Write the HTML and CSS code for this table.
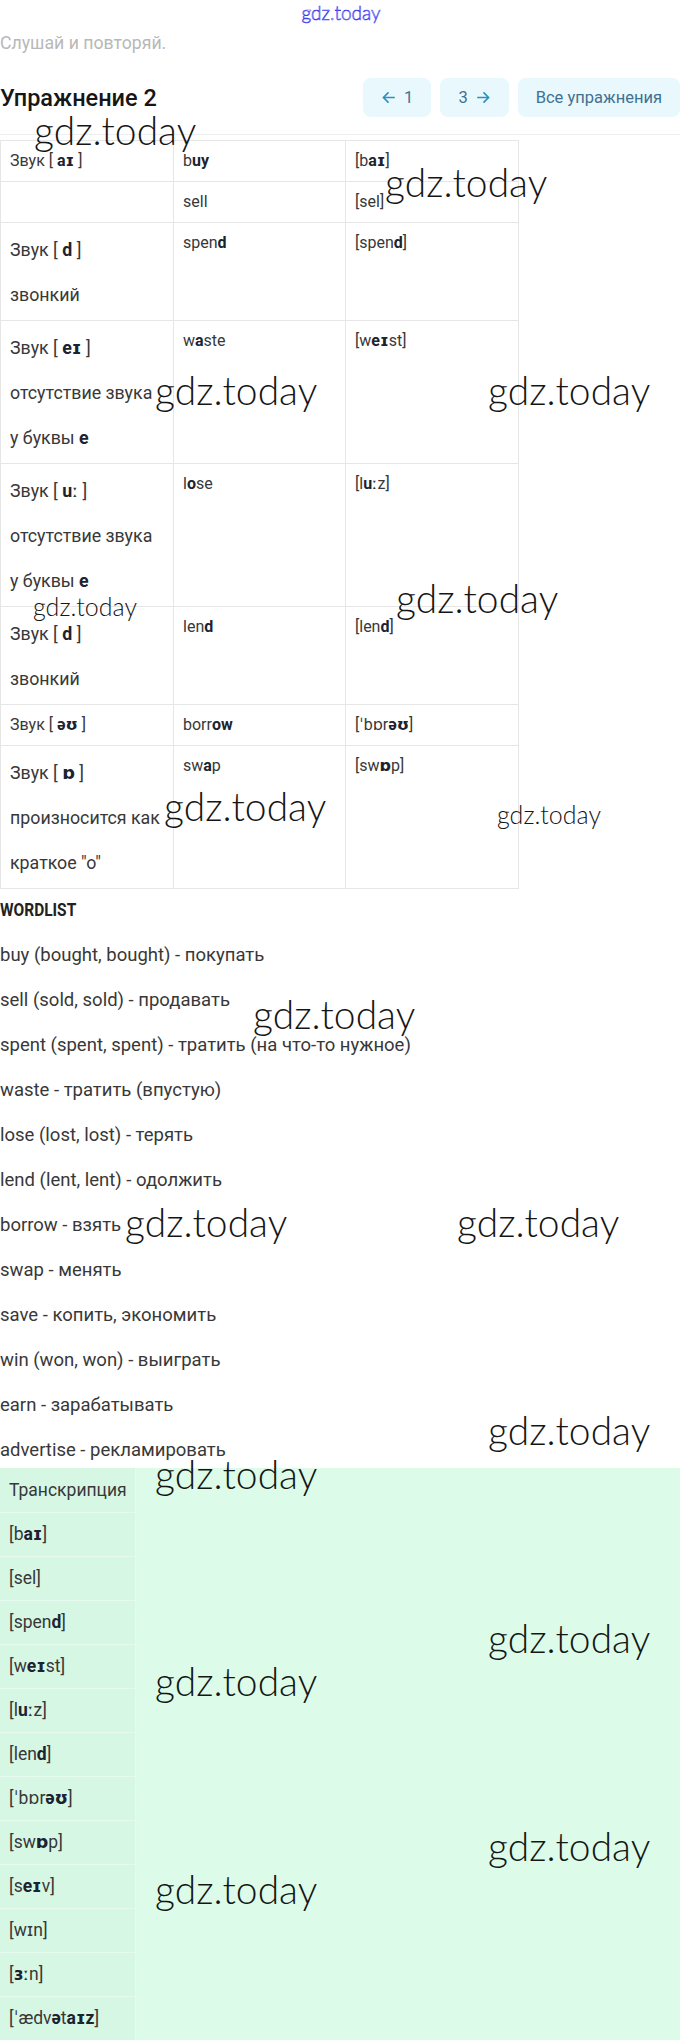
FILE: index.html
```html
<!DOCTYPE html>
<html lang="ru">
<head>
<meta charset="utf-8">
<title>Упражнение 2</title>
<link rel="stylesheet" href="styles.css">
</head>
<body>
<div class="page">
  <div class="site-mark">gdz.today</div>
  <p class="intro">Слушай и повторяй.</p>

  <div class="header">
    <h1 class="title">Упражнение 2</h1>
    <nav class="nav">
      <a class="btn" href="#"><svg class="arrow" viewBox="0 0 16 16" width="15" height="15"><path d="M14 8H2.5M7.5 3L2.5 8l5 5"/></svg><span>1</span></a>
      <a class="btn" href="#"><span>3</span><svg class="arrow" viewBox="0 0 16 16" width="15" height="15"><path d="M2 8h11.5M8.5 3l5 5-5 5"/></svg></a>
      <a class="btn btn-all" href="#">Все упражнения</a>
    </nav>
  </div>

  <table class="sounds">
    <colgroup><col class="c1"><col class="c2"><col class="c3"></colgroup>
    <tr>
      <td>Звук <span class="br">[ <b>aɪ</b> ]</span></td>
      <td>b<b>uy</b></td>
      <td>[b<b>aɪ</b>]</td>
    </tr>
    <tr>
      <td></td>
      <td>sell</td>
      <td>[sel]</td>
    </tr>
    <tr>
      <td class="multi">Звук <span class="br">[ <b>d</b> ]</span><br>звонкий</td>
      <td>spen<b>d</b></td>
      <td>[spen<b>d</b>]</td>
    </tr>
    <tr>
      <td class="multi">Звук <span class="br">[ <b>eɪ</b> ]</span><br>отсутствие звука<br>у буквы <b>e</b></td>
      <td>w<b>a</b>ste</td>
      <td>[w<b>eɪ</b>st]</td>
    </tr>
    <tr>
      <td class="multi">Звук <span class="br">[ <b>u</b>ː ]</span><br>отсутствие звука<br>у буквы <b>e</b></td>
      <td>l<b>o</b>se</td>
      <td>[l<b>u</b>ːz]</td>
    </tr>
    <tr>
      <td class="multi">Звук <span class="br">[ <b>d</b> ]</span><br>звонкий</td>
      <td>len<b>d</b></td>
      <td>[len<b>d</b>]</td>
    </tr>
    <tr>
      <td>Звук <span class="br">[ <b>əʊ</b> ]</span></td>
      <td>borr<b>ow</b></td>
      <td>[ˈbɒr<b>əʊ</b>]</td>
    </tr>
    <tr>
      <td class="multi">Звук <span class="br">[ <b>ɒ</b> ]</span><br>произносится как<br>краткое "о"</td>
      <td>sw<b>a</b>p</td>
      <td>[sw<b>ɒ</b>p]</td>
    </tr>
  </table>

  <section class="wordlist">
    <h2 class="wl-title"><span class="wl-text">WORDLIST</span></h2>
    <p>buy (bought, bought) - покупать</p>
    <p>sell (sold, sold) - продавать</p>
    <p>spent (spent, spent) - тратить (на что-то нужное)</p>
    <p>waste - тратить (впустую)</p>
    <p>lose (lost, lost) - терять</p>
    <p>lend (lent, lent) - одолжить</p>
    <p>borrow - взять</p>
    <p>swap - менять</p>
    <p>save - копить, экономить</p>
    <p>win (won, won) - выиграть</p>
    <p>earn - зарабатывать</p>
    <p>advertise - рекламировать</p>
  </section>

  <section class="green">
    <table class="trans">
      <tr><td>Транскрипция</td></tr>
      <tr><td>[b<b>aɪ</b>]</td></tr>
      <tr><td>[sel]</td></tr>
      <tr><td>[spen<b>d</b>]</td></tr>
      <tr><td>[w<b>eɪ</b>st]</td></tr>
      <tr><td>[l<b>u</b>ːz]</td></tr>
      <tr><td>[len<b>d</b>]</td></tr>
      <tr><td>[ˈbɒr<b>əʊ</b>]</td></tr>
      <tr><td>[sw<b>ɒ</b>p]</td></tr>
      <tr><td>[s<b>eɪ</b>v]</td></tr>
      <tr><td>[wɪn]</td></tr>
      <tr><td>[<b>ɜ</b>ːn]</td></tr>
      <tr><td>[ˈædv<b>ə</b>t<b>aɪz</b>]</td></tr>
    </table>
  </section>

  <div class="wm wm-l" style="left:34px;top:111px">gdz.today</div>
  <div class="wm wm-l" style="left:385px;top:163px">gdz.today</div>
  <div class="wm wm-l" style="left:155px;top:371px">gdz.today</div>
  <div class="wm wm-l" style="left:488px;top:371px">gdz.today</div>
  <div class="wm wm-s" style="left:33px;top:594px">gdz.today</div>
  <div class="wm wm-l" style="left:396px;top:579px">gdz.today</div>
  <div class="wm wm-l" style="left:164px;top:787px">gdz.today</div>
  <div class="wm wm-s" style="left:497px;top:802px">gdz.today</div>
  <div class="wm wm-l" style="left:253px;top:995px">gdz.today</div>
  <div class="wm wm-l" style="left:125px;top:1203px">gdz.today</div>
  <div class="wm wm-l" style="left:457px;top:1203px">gdz.today</div>
  <div class="wm wm-l" style="left:488px;top:1411px">gdz.today</div>
  <div class="wm wm-l" style="left:155px;top:1455px">gdz.today</div>
  <div class="wm wm-l" style="left:488px;top:1619px">gdz.today</div>
  <div class="wm wm-l" style="left:155px;top:1662px">gdz.today</div>
  <div class="wm wm-l" style="left:488px;top:1827px">gdz.today</div>
  <div class="wm wm-l" style="left:155px;top:1870px">gdz.today</div>
</div>
</body>
</html>
```

FILE: styles.css
```css
html, body {
  margin: 0;
  padding: 0;
  overflow-x: hidden;
  background: #ffffff;
}

body {
  font-family: Roboto, "DejaVu Sans", sans-serif;
  font-size: 16px;
  color: #383838;
}

.page {
  position: relative;
  min-height: 2040px;
}

.site-mark {
  height: 28px;
  text-align: center;
  font-family: Lato, "DejaVu Sans", sans-serif;
  font-weight: 300;
  font-size: 19px;
  line-height: 26px;
  color: transparent;
  -webkit-text-stroke: 0.6px #3b3bf0;
  padding-left: 2px;
}

.intro {
  margin: 3px 0 0;
  line-height: 24px;
  font-size: 17.7px;
  color: #b8b8b8;
}

.header {
  display: flex;
  align-items: center;
  justify-content: space-between;
  margin-top: 23px;
  padding-bottom: 17px;
  border-bottom: 1px solid #eeeeee;
}

.title {
  margin: 0;
  font-size: 23.5px;
  font-weight: 500;
  color: #161616;
  line-height: 30px;
}

.nav {
  display: flex;
  gap: 9px;
}

.btn {
  display: flex;
  align-items: center;
  gap: 8px;
  height: 39px;
  padding: 0 18px;
  border-radius: 8px;
  background: #e8f8fd;
  color: #3f7191;
  text-decoration: none;
  font-size: 16.5px;
  white-space: nowrap;
}

.arrow {
  fill: none;
  stroke: #2f8fbf;
  stroke-width: 1.8;
  stroke-linecap: round;
  stroke-linejoin: round;
}

.sounds {
  margin-top: 5px;
  border-collapse: collapse;
  table-layout: fixed;
  width: 518px;
}

.sounds .c1 { width: 173px; }
.sounds .c2 { width: 172px; }
.sounds .c3 { width: 173px; }

.sounds td {
  border: 1px solid #e6e6e6;
  padding: 8px 9px;
  line-height: 24px;
  vertical-align: top;
  white-space: nowrap;
}

.sounds td.multi {
  padding: 4px 9px 3px;
  line-height: 45px;
  font-size: 17.8px;
}

b {
  font-weight: 700;
  color: #1c2330;
}

.br {
  color: #383838;
}

.wordlist {
  margin: 0;
}

.wl-title {
  margin: 9px 0 0;
  font-size: 18px;
  font-weight: 700;
  line-height: 24px;
  color: #222222;
}

.wl-text {
  display: inline-block;
  transform: scaleX(0.86);
  transform-origin: left center;
}

.wordlist p {
  margin: 21px 0 0;
  line-height: 24px;
  font-size: 18.5px;
}

.green {
  margin-top: 6px;
  background: #dcfce9;
  min-height: 574px;
}

.trans {
  border-collapse: collapse;
  table-layout: fixed;
  width: 136px;
}

.trans td {
  background: #d7f7e5;
  border-bottom: 1px solid #e6fbee;
  border-right: 1px solid #e6fbee;
  padding: 10px 0 10px 9px;
  line-height: 23px;
  font-size: 17.5px;
  white-space: nowrap;
}

.trans tr:first-child td {
  padding-top: 11px;
}

.wm {
  position: absolute;
  font-family: Lato, "DejaVu Sans", sans-serif;
  font-weight: 300;
  color: #151515;
  line-height: 1;
  white-space: nowrap;
  pointer-events: none;
}

.wm-l {
  font-size: 39px;
}

.wm-s {
  font-size: 25px;
}
```
